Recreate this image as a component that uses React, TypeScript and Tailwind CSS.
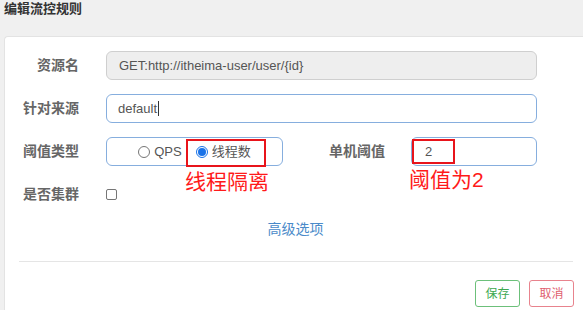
const labelCls =
  "w-[74px] shrink-0 text-right text-[14px] font-bold text-[#666]";

function Radio({ checked }: { checked?: boolean }) {
  return checked ? (
    <span className="flex h-[12px] w-[12px] items-center justify-center rounded-full border border-[#1a73e8] bg-white">
      <span className="h-[8px] w-[8px] rounded-full bg-[#1a73e8]" />
    </span>
  ) : (
    <span className="h-[12px] w-[12px] rounded-full border border-[#767676] bg-white" />
  );
}

export default function App() {
  return (
    <div className="flex h-[310px] w-[583px] flex-col overflow-hidden bg-[#f0f0f0] font-['Liberation_Sans','Noto_Sans_CJK_SC',sans-serif]">
      <div className="h-[36px] shrink-0 pl-[4px] pt-[1px] text-[13px] font-bold leading-[16px] text-[#333]">
        编辑流控规则
      </div>

      <div className="ml-[4px] flex w-[590px] flex-1 flex-col rounded-tl-[4px] border-l border-t border-[#e3e3e3] bg-white">
        <div className="flex flex-col gap-[14px] pt-[14px]">
          <div className="flex h-[29px] items-center gap-[27px]">
            <span className={labelCls}>资源名</span>
            <div className="flex h-[29px] w-[431px] items-center rounded-[6px] border border-[#cfcfcf] bg-[#eeeeee] pl-[12px] text-[13px] text-[#555]">
              GET:http://itheima-user/user/{"{id}"}
            </div>
          </div>

          <div className="flex h-[29px] items-center gap-[27px]">
            <span className={labelCls}>针对来源</span>
            <div className="flex h-[29px] w-[431px] items-center rounded-[6px] border border-[#86aede] bg-white pl-[11px] text-[13px] text-[#555]">
              default
              <span className="ml-[1px] h-[15px] w-[1px] bg-[#333]" />
            </div>
          </div>

          <div className="flex h-[29px] items-center">
            <span className={labelCls}>阈值类型</span>
            <div className="relative ml-[27px] flex h-[29px] w-[177px] items-center justify-center gap-[4px] rounded-[6px] border border-[#86aede] bg-white text-[13px] text-[#555]">
              <Radio />
              <span>QPS</span>
              <span className="ml-[10px]">
                <Radio checked />
              </span>
              <span>线程数</span>
              <div className="absolute left-[79px] top-[1px] h-[28px] w-[80px] border-2 border-[#e8141b]" />
              <div className="absolute left-[78px] top-[32px] whitespace-nowrap text-[21px] leading-[24px] text-[#ff1a1a]">
                线程隔离
              </div>
            </div>
            <span className="w-[102px] text-right text-[14px] font-bold text-[#666]">
              单机阈值
            </span>
            <div className="relative ml-[26px] flex h-[29px] w-[126px] items-center rounded-[6px] border border-[#86aede] bg-white pl-[13px] text-[13px] text-[#555]">
              2
              <div className="absolute left-[0px] top-[1px] h-[25px] w-[43px] border-2 border-[#e8141b]" />
              <div className="absolute left-[-3px] top-[30px] whitespace-nowrap text-[21px] leading-[24px] text-[#ff1a1a]">
                阈值为2
              </div>
            </div>
          </div>

          <div className="flex h-[29px] items-center gap-[27px]">
            <span className={labelCls}>是否集群</span>
            <span className="h-[11px] w-[11px] rounded-[2px] border border-[#767676] bg-white" />
          </div>
        </div>

        <div className="mt-[10px] pr-[8px] text-center text-[14px] leading-[20px] text-[#4a8ac9]">
          高级选项
        </div>

        <div className="ml-[14px] mr-[21px] mt-[22px] h-[1px] bg-[#e5e5e5]" />

        <div className="mr-[20px] mt-[18px] flex justify-end gap-[9px]">
          <button className="h-[27px] w-[45px] rounded-[3px] border border-[#6cc07a] bg-white text-[12px] text-[#3da84f]">
            保存
          </button>
          <button className="h-[27px] w-[45px] rounded-[3px] border border-[#e8838d] bg-white text-[12px] text-[#e0606e]">
            取消
          </button>
        </div>
      </div>
    </div>
  );
}
